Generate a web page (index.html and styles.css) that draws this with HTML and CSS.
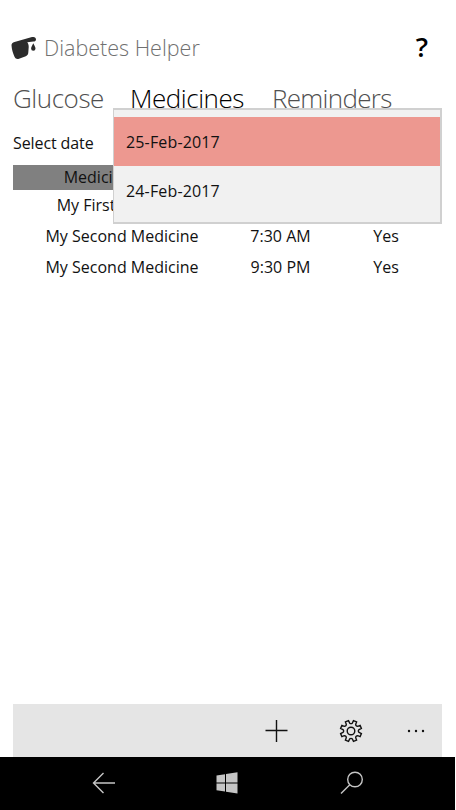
FILE: index.html
```html
<!DOCTYPE html>
<html lang="en">
<head>
<meta charset="utf-8">
<title>Diabetes Helper</title>
<link rel="stylesheet" href="styles.css">
</head>
<body>
<div class="phone">
  <header class="header">
    <svg class="logo" viewBox="0 0 26 24"><path d="M.5 9.300C.4 7.600 1.600 6.600 3.500 6L21 1.100C23.500.4 24.900 1.500 25 3.200C25.100 4.800 24 5.400 22.300 5.600L16.300 6.300C17.500 8 17.700 9.500 17.700 11L17.300 16.500C17.200 18.500 16.500 19.500 14.800 20.200L8 22.800C6 23.500 4.500 22.800 3.500 20.800C2 17.500.7 13 .5 9.300Z"/><path d="M22.300 7.300C23 9.200 24.500 10.700 24.500 12.500A2.200 2.200 0 0 1 20.100 12.500C20.100 10.700 21.600 9.200 22.300 7.300Z"/></svg>
    <h1 class="title">Diabetes Helper</h1>
    <span class="help">?</span>
  </header>
  <nav class="tabs">
    <span class="tab glucose">Glucose</span>
    <span class="tab medicines">Medicines</span>
    <span class="tab reminders">Reminders</span>
  </nav>
  <main class="content">
    <div class="picker">
      <span class="label">Select date</span>
      <div class="dropdown">
        <div class="option selected">25-Feb-2017</div>
        <div class="option">24-Feb-2017</div>
      </div>
    </div>
    <div class="row head"><span>Medicine Name</span><span></span><span></span></div>
    <div class="row first"><span>My First Medicine</span><span></span><span></span></div>
    <div class="row"><span>My Second Medicine</span><span>7:30 AM</span><span>Yes</span></div>
    <div class="row"><span>My Second Medicine</span><span>9:30 PM</span><span>Yes</span></div>
  </main>
  <footer class="commands">
    <svg class="icon plus" viewBox="0 0 24 24"><path d="M12.500 1V23M1.500 11.500H23.500"/></svg>
    <svg class="icon gear" viewBox="-12 -12 24 24"><path d="M8.080 1.420L10.400 2.500L9.120 5.590L6.720 4.700Q4.670 4.670 4.700 6.720L5.590 9.120L2.500 10.400L1.420 8.080Q0 6.600-1.420 8.080L-2.500 10.400L-5.590 9.120L-4.700 6.720Q-4.670 4.670-6.720 4.700L-9.120 5.590L-10.400 2.500L-8.080 1.420Q-6.600 0-8.080-1.420L-10.400-2.500L-9.120-5.590L-6.720-4.700Q-4.670-4.670-4.700-6.720L-5.590-9.120L-2.500-10.400L-1.420-8.080Q0-6.600 1.420-8.080L2.500-10.400L5.590-9.120L4.700-6.720Q4.670-4.670 6.720-4.700L9.120-5.590L10.400-2.500L8.080-1.420Q6.600 0 8.080 1.420Z"/><circle r="3.800"/></svg>
    <svg class="icon more" viewBox="0 0 24 24"><circle cx="5" cy="12" r="1.200"/><circle cx="12" cy="12" r="1.200"/><circle cx="19" cy="12" r="1.200"/></svg>
  </footer>
  <div class="system">
    <svg class="icon back" viewBox="0 0 24 24"><path d="M23 12H1.500M11.500 2L1.500 12L11.500 22"/></svg>
    <svg class="icon windows" viewBox="0 0 24 24"><path d="M1.500 4.500L10 3.200V11.400H1.500ZM11 3L22.500 1.300V11.400H11ZM1.500 12.500H10V20.500L1.500 19.300ZM11 12.500H22.500V22.500L11 20.700Z"/></svg>
    <svg class="icon search" viewBox="0 0 24 24"><circle cx="15" cy="8.500" r="7.300"/><path d="M9.800 13.700L1 22.500"/></svg>
  </div>
</div>
</body>
</html>
```
FILE: styles.css
```css
* { box-sizing: border-box; }
body { margin: 0; background: #fff; color: #111; font-family: "Open Sans", "Noto Sans", sans-serif; }
.phone { width: 456px; height: 810px; display: flex; flex-direction: column; overflow: hidden; }
.header { height: 72px; padding: 24px 28px 0 11px; display: flex; align-items: center; }
.logo { width: 26px; height: 24px; fill: #2b2b2b; }
.title { margin: 0 0 0 7px; font-size: 21.5px; font-weight: 330; line-height: 30px; color: #707070; white-space: nowrap; }
.help { margin: 0 0 2px auto; font-size: 27px; font-weight: 600; line-height: 30px; color: #000; }
.tabs { height: 56px; padding-left: 13px; display: flex; }
.tab { font-size: 26px; font-weight: 300; line-height: 53px; color: #505050; white-space: nowrap; letter-spacing: -0.45px; }
.glucose { width: 117px; }
.medicines { width: 142px; color: #000; }
.reminders { letter-spacing: -0.7px; }
.content { flex: 1; padding: 0 14px 0 13px; font-size: 16px; white-space: nowrap; }
.picker { position: relative; height: 37px; }
.label { display: block; line-height: 30px; letter-spacing: -0.1px; }
.dropdown { position: absolute; z-index: 1; left: 100px; top: -20px; width: 329px; height: 116px; padding: 7px 0; background: #f1f1f1; border: 2px solid #d0d0d0; border-left-width: 1px; }
.option { height: 49px; line-height: 50px; padding-left: 12px; letter-spacing: 0.15px; }
.selected { background: #ed9890; }
.row { display: grid; grid-template-columns: 218px 99px 112px; height: 31px; line-height: 31px; text-align: center; }
.head { height: 25px; line-height: 24px; background: #808080; }
.commands { height: 53px; margin: 0 14px 0 13px; background: #e5e5e5; display: flex; justify-content: flex-end; align-items: center; padding-right: 14px; }
.icon { width: 24px; height: 24px; fill: none; stroke: #111; stroke-width: 1.4; }
.gear { margin-left: 51px; }
.more { margin-left: 41px; fill: #111; stroke: none; }
.system { width: 455px; height: 53px; background: #000; display: flex; align-items: center; padding: 0 0 2px 92px; }
.system .icon { stroke: #c5c5c5; }
.system .windows { margin-left: 99px; fill: #c5c5c5; stroke: none; }
.system .search { margin-left: 101px; }
```
